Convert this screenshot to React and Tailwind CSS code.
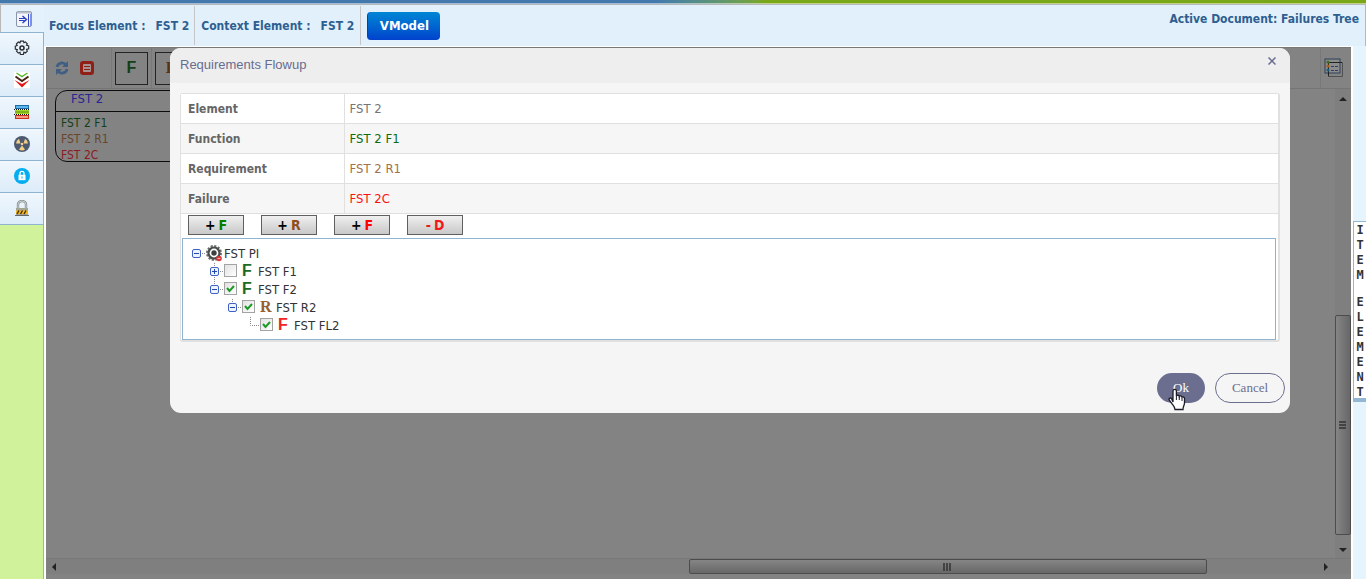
import React, { useState } from 'react';

const SIDE_ITEMS = ['Settings', 'Priorities', 'Library', 'Hazards', 'Unlock', 'Locked'];

const DETAILS = [
  { label: 'Element', value: 'FST 2', color: 'text-[#757575]' },
  { label: 'Function', value: 'FST 2 F1', color: 'text-[#0f6a0f]' },
  { label: 'Requirement', value: 'FST 2 R1', color: 'text-[#a0714a]' },
  { label: 'Failure', value: 'FST 2C', color: 'text-[#ff1010]' },
];

const ACTIONS = [
  { sign: '+', letter: 'F', color: 'text-[#008000]', signColor: 'text-black', label: 'Add function' },
  { sign: '+', letter: 'R', color: 'text-[#8f4f1c]', signColor: 'text-black', label: 'Add requirement' },
  { sign: '+', letter: 'F', color: 'text-[#ff0000]', signColor: 'text-black', label: 'Add failure' },
  { sign: '-', letter: 'D', color: 'text-[#f01818]', signColor: 'text-[#f01818]', label: 'Delete' },
];

const NODES = [
  { id: 'f1', name: 'FST F1', type: 'F', color: 'text-[#1d6b22]', indent: 'pl-[18px]', open: false, expander: true, checked: false },
  { id: 'f2', name: 'FST F2', type: 'F', color: 'text-[#1d6b22]', indent: 'pl-[18px]', open: true, expander: true, checked: true },
  { id: 'r2', name: 'FST R2', type: 'R', color: 'text-[#98602f]', indent: 'pl-9', open: true, expander: true, checked: true },
  { id: 'fl2', name: 'FST FL2', type: 'F', color: 'text-[#f42222]', indent: 'pl-[54px]', expander: false, checked: true },
];

const SideIcon = ({ name }) => {
  if (name === 'Settings') {
    return (
      <svg width="16" height="16" viewBox="0 0 16 16" fill="none" stroke="#2b2f33" strokeWidth="1.2">
        <path d="M6.5 1.2h3l.4 1.5 1.5-.8 1.9 1.9-.8 1.4 2.2.7v3l-2.1.6.7 1.6-1.9 1.9-1.5-.8-.5 2.3h-3L6 12.3l-1.6.8-1.9-1.9.8-1.5-2-.6v-3l1.9-.6-.8-1.6 2-1.9 1.5.8z" />
        <circle cx="8" cy="8" r="2" strokeWidth="1.6" />
      </svg>
    );
  }
  if (name === 'Priorities') {
    return (
      <svg width="16" height="16" viewBox="0 0 16 16" fill="none">
        <rect width="16" height="16" fill="#fff" />
        <path d="M2.5 1l5.5 3.6L13.5 1" stroke="#58b92c" strokeWidth="1.4" />
        <path d="M1.5 4.5L8 9l6.5-4.5" stroke="#4a2418" strokeWidth="2" />
        <path d="M.5 8L8 15.5 15.5 8 8 12z" fill="#e81414" />
      </svg>
    );
  }
  if (name === 'Library') {
    return (
      <svg width="16" height="16" viewBox="0 0 16 16">
        <rect x="1.5" y="1.5" width="13" height="3" fill="#5ab6ec" stroke="#1c6ca4" />
        <rect x="1" y="6" width="14" height="4" fill="#a4d62c" />
        <path d="M0 5.5h16M0 10.5h16" stroke="#111" strokeDasharray="1 1" />
        <path d="M1 8h14" stroke="#5c8d0b" />
        <rect x="1.5" y="11.5" width="13" height="3" fill="#f49a80" stroke="#cc2d1c" />
      </svg>
    );
  }
  if (name === 'Hazards') {
    return (
      <svg width="16" height="16" viewBox="0 0 16 16">
        <circle cx="8" cy="8" r="8" fill="#4d5a70" />
        <g fill="#f6cf86">
          <path d="M6.5 7.5H2A6 6 0 0 1 5 2.8z" />
          <path d="M9.5 7.5H14A6 6 0 0 0 11 2.8z" />
          <path d="M8 9.5l3 4.1a6 6 0 0 1-6 0z" />
          <circle cx="8" cy="8" r="1.3" />
        </g>
      </svg>
    );
  }
  if (name === 'Unlock') {
    return (
      <svg width="16" height="16" viewBox="0 0 16 16">
        <circle cx="8" cy="8" r="8" fill="#04adf0" />
        <path d="M6 7V5.3a2 2 0 0 1 4 0V7" fill="none" stroke="#fff" strokeWidth="1.3" />
        <rect x="4.5" y="6.8" width="7" height="5.4" fill="#fff" />
        <rect x="7.5" y="8.5" width="1" height="2" fill="#04adf0" />
      </svg>
    );
  }
  return (
    <svg width="16" height="16" viewBox="0 0 16 16">
      <path d="M4 9V4.5a4 3.5 0 0 1 8 0V9" fill="none" stroke="#849092" strokeWidth="2.4" />
      <path d="M4 9V4.5a4 3.5 0 0 1 8 0V9" fill="none" stroke="#c9d2d2" strokeWidth="1" />
      <rect x="2" y="8" width="12" height="7" fill="#a5a594" />
      <rect x="2" y="10.5" width="12" height="3.5" fill="#f3b416" />
      <path d="M3 14l2-3.5M6.5 14l2-3.5M10 14l2-3.5" stroke="#33280a" strokeWidth="1.3" />
      <path d="M1 15.5h14" stroke="#666" />
    </svg>
  );
};

const Expander = ({ open, name }) => (
  <button type="button" aria-label={`Toggle ${name}`} className="w-[10px] h-[18px] shrink-0">
    <svg width="10" height="18" viewBox="0 0 10 18">
      <path
        d={name === 'FST F1' ? 'M4.5 0v4M4.5 14v4' : 'M4.5 0v4'}
        stroke={name === 'FST PI' ? 'none' : '#8a8a8a'}
        strokeDasharray="1 1"
      />
      <rect x=".5" y="4.5" width="8" height="8" rx="1.5" fill="#eef4ff" stroke="#3f62c4" />
      <path d={open ? 'M2 8.5h5' : 'M2 8.5h5M4.5 6v5'} stroke="#2347ac" />
    </svg>
  </button>
);

const TreeNode = ({ node, checked, onToggle }) => (
  <div className={`flex items-center h-[18px] ${node.indent}`}>
    {node.expander ? (
      <>
        <Expander open={node.open} name={node.name} />
        <svg width="4" height="18" className="shrink-0">
          <path d="M0 8.5h4" stroke="#8a8a8a" strokeDasharray="1 1" />
        </svg>
      </>
    ) : (
      <svg width="14" height="18" className="shrink-0">
        <path d="M4.5 0v8.5H14" fill="none" stroke="#8a8a8a" strokeDasharray="1 1" />
      </svg>
    )}
    <label className="flex items-center">
      <span className="relative flex w-[18px] pb-0.5">
        <input
          type="checkbox"
          checked={checked}
          onChange={() => onToggle(node.id)}
          className="appearance-none w-[13px] h-[13px] border border-[#a3a3a3] bg-linear-to-br from-[#e2e2e2] to-white"
        />
        {checked && (
          <svg width="13" height="13" className="absolute left-0 top-0 pointer-events-none">
            <path d="M3 6l2.5 3L10 4" fill="none" stroke="#1d9c25" strokeWidth="2" />
          </svg>
        )}
      </span>
      <span
        className={`w-4 pb-0.5 text-base leading-4 font-bold ${node.color} ${
          node.type === 'R' ? "font-['Liberation_Serif',serif]" : "font-['Liberation_Sans',sans-serif]"
        }`}
      >
        {node.type}
      </span>
      <span>{node.name}</span>
    </label>
  </div>
);

const Header = () => (
  <header className="flex justify-between h-[41px] shrink-0 bg-[#e2f0fb] border-r border-[#b8b8b8] font-bold text-xs text-[#2e5f91]">
    <div className="flex items-center">
      <div className="flex items-center h-[39px] px-[5px] gap-[10px] border-r border-[#c6c6c6]">
        <span>Focus Element :</span>
        <span>FST 2</span>
      </div>
      <div className="flex items-center h-[39px] px-[6px] gap-[10px] border-r border-[#c6c6c6]">
        <span>Context Element :</span>
        <span>FST 2</span>
      </div>
      <button type="button" className="ml-[6px] h-7 w-[73px] rounded-[4px] text-white text-[13px] border-l border-[#0a3cc0] bg-linear-to-b from-[#0486d4] to-[#0341cc]">
        VModel
      </button>
    </div>
    <span className="pt-[6px] pr-[6px]">Active Document: Failures Tree</span>
  </header>
);

const Sidebar = () => (
  <nav className="flex flex-col w-11 shrink-0 bg-[#cff29a] border-r border-[#8fb4d2]">
    <button type="button" aria-label="Collapse" className="h-[27px] pl-[3px] -mr-px flex items-center justify-center bg-[#e5f1fb] border-l border-[#b8b8b8]">
      <svg width="16" height="16" viewBox="0 0 16 16" fill="none">
        <rect x=".5" y=".5" width="15" height="15" rx="1.5" fill="#f2f5fb" stroke="#8b93a6" />
        <path d="M1 1.5h14" stroke="#b9bfca" strokeWidth="2" />
        <path d="M12.5 3v12" stroke="#3345c0" />
        <path d="M14.5 3v12" stroke="#7d93e8" />
        <path d="M3 7.5h6M3 9.5h6" stroke="#2b3fc0" />
        <path d="M6.5 5l4 3.5-4 3.5" stroke="#2b3fc0" strokeWidth="1.4" />
      </svg>
    </button>
    <div className="border-t border-[#8fb4d2]">
      {SIDE_ITEMS.map((name) => (
        <button
          key={name}
          type="button"
          aria-label={name}
          className="w-full h-8 pb-px flex items-center justify-center bg-linear-to-b from-[#f0f7fd] to-[#dcecf9] border-b border-[#8fb4d2]"
        >
          <SideIcon name={name} />
        </button>
      ))}
    </div>
  </nav>
);

const Toolbar = () => (
  <div className="flex items-center justify-between h-[42px] border-t border-l border-b border-b-[#757575] border-t-[#777] border-l-[#777]">
    <div className="flex items-center">
      <div className="flex items-center h-10 w-[65px] pl-2 gap-[10px] border-r border-[#787878]">
        <button type="button" aria-label="Refresh">
          <svg width="14" height="14" viewBox="0 0 14 14" fill="none" stroke="#415f82" strokeWidth="2.8">
            <path d="M2 6a5 5 0 0 1 9-2M12 8a5 5 0 0 1-9 2" />
            <path d="M13 0v6H7zM1 14V8h6z" fill="#415f82" stroke="none" />
          </svg>
        </button>
        <button type="button" aria-label="Remove">
          <svg width="16" height="16" viewBox="0 0 16 16">
            <rect x="1" y="1" width="14" height="14" rx="3" fill="#901f18" />
            <rect x="4" y="4" width="8" height="8" rx="1" fill="#a69290" />
            <path d="M5 6.5h6M5 9.5h6" stroke="#901f18" />
          </svg>
        </button>
      </div>
      <div className="flex items-center h-10 w-10 pl-[3px] border-r border-[#787878]">
        <button type="button" className="w-[33px] h-[33px] border border-[#222] text-[#123f15] text-base leading-4 font-bold font-['Liberation_Sans',sans-serif]">
          F
        </button>
      </div>
      <button type="button" className="ml-[3px] w-[33px] h-[33px] border border-[#222] text-[#553319] text-base leading-4 font-bold font-['Liberation_Serif',serif]">
        R
      </button>
    </div>
    <button type="button" aria-label="Legend" className="h-10 w-[31px] pl-[3px] border-l border-[#787878]">
      <svg width="20" height="20" viewBox="0 0 20 20" fill="none">
        <rect x="1" y="1" width="15" height="14" fill="#8c8c8c" stroke="#2d4058" />
        <path d="M4.5 18V4.5H18.5V18.5H4" stroke="#505050" />
        <path d="M4.5 18V4.5H18" stroke="#222" />
        <path d="M7 8.5h3M11 8.5h3M7 12.5h3M11 12.5h3" stroke="#303f68" />
        <circle cx="4" cy="4" r="1.6" fill="#3f6e1c" />
        <circle cx="4" cy="8" r="1.6" fill="#b05c14" />
        <circle cx="4" cy="12" r="1.6" fill="#166080" />
      </svg>
    </button>
  </div>
);

const Canvas = () => (
  <div className="flex-1 flex flex-col min-h-0">
    <div className="flex-1 flex min-h-0">
      <div className="flex-1 pl-[9px] pt-px">
        <div className="w-80 h-[72px] border border-[#0c0c0c] rounded-xl text-[13px] leading-4 overflow-hidden">
          <div className="h-[21px] pl-[15px] text-[#2a2494] border-b border-[#0c0c0c]">FST 2</div>
          <ul className="pl-[5px] pt-[3px] text-xs leading-4">
            <li className="text-[#123f15]">FST 2 F1</li>
            <li className="text-[#68452b]">FST 2 R1</li>
            <li className="text-[#8e1a22]">FST 2C</li>
          </ul>
        </div>
      </div>
      <div className="w-4 flex flex-col items-center bg-[#7f7f7f]">
        <svg width="8" height="18" className="shrink-0"><path d="M0 12h8L4 8z" fill="#222" /></svg>
        <div className="flex-[209]" />
        <div className="flex-[219] w-full flex items-center justify-center rounded-xs border border-[#4c4c4c] bg-linear-to-r from-[#858585] to-[#676769]">
          <svg width="8" height="9"><path d="M0 1h7M0 4h7M0 7h7" stroke="#333" strokeWidth="1.5" /></svg>
        </div>
        <svg width="8" height="23" className="shrink-0"><path d="M0 13h8l-4 4z" fill="#222" /></svg>
      </div>
    </div>
    <div className="flex items-center h-4 mb-[5px] border-t border-[#787878] bg-[#7f7f7f]">
      <svg width="16" height="10" className="shrink-0"><path d="M10 1v8L6 5z" fill="#222" /></svg>
      <div className="flex-[628]" />
      <div className="flex-[518] h-[15px] flex items-center justify-center rounded-xs border border-[#4c4c4c] bg-linear-to-b from-[#858585] to-[#686868]">
        <svg width="9" height="8"><path d="M1 0v8M4 0v8M7 0v8" stroke="#333" strokeWidth="1.5" /></svg>
      </div>
      <div className="flex-[112]" />
      <svg width="32" height="10" className="shrink-0"><path d="M5 1v8l4-4z" fill="#222" /></svg>
    </div>
  </div>
);

const FlowupDialog = () => {
  const [checked, setChecked] = useState(
    Object.fromEntries(NODES.map((node) => [node.id, node.checked]))
  );

  const toggle = (id) => setChecked((prev) => ({ ...prev, [id]: !prev[id] }));

  return (
    <section role="dialog" aria-labelledby="flowup-title" className="absolute left-[124px] right-[61px] top-px rounded-[11px] overflow-hidden bg-[#f5f5f5]">
      <div className="flex justify-between h-[35px] pl-[10px] pr-[13px] bg-[#eeeeee] text-[#696c8e]">
        <h2 id="flowup-title" className="pt-2 text-[13px] leading-[18px] font-['Liberation_Sans',sans-serif]">Requirements Flowup</h2>
        <button type="button" aria-label="Close" className="w-[10px] h-[26px] flex items-center justify-center">
          <svg width="8" height="8" viewBox="0 0 8 8"><path d="M.5.5l7 7M7.5.5l-7 7" stroke="#696c8e" strokeWidth="1.5" /></svg>
        </button>
      </div>

      <div className="mt-[10px] mx-[10px] border border-r-2 border-b-2 border-[#e0e0e0] rounded-[3px] bg-white">
        <table className="w-full text-[13px] leading-[18px]">
          <tbody>
            {DETAILS.map((row) => (
              <tr key={row.label} className="h-[30px] first:h-[29px] border-b border-[#e0e0e0] odd:bg-white even:bg-[#f6f6f6]">
                <th scope="row" className="w-[163px] pl-[7px] pt-0.5 text-left text-xs leading-[18px] text-[#666] border-r border-[#e0e0e0]">{row.label}</th>
                <td className={`pl-[5px] pt-px ${row.color}`}>{row.value}</td>
              </tr>
            ))}
          </tbody>
        </table>

        <div className="flex gap-[17px] pl-[7px] pt-px pb-[2px]">
          {ACTIONS.map((action) => (
            <button
              key={action.label}
              type="button"
              aria-label={action.label}
              className="flex items-center justify-center gap-[3px] w-14 h-5 border border-[#606060] bg-linear-to-b from-[#f0f0f0] to-[#c8c8c8] font-bold text-sm leading-4"
            >
              <span className={action.signColor}>{action.sign}</span>
              <span className={action.color}>{action.letter}</span>
            </button>
          ))}
        </div>

        <div className="mt-px ml-px mr-0.5 h-[102px] pt-[6px] pl-[9px] border border-[#8fb4d2] bg-white text-[13px] text-[#333]">
          <div className="flex items-center h-[18px]">
            <Expander open name="FST PI" />
            <svg width="4" height="18"><path d="M0 8.5h4" stroke="#8a8a8a" strokeDasharray="1 1" /></svg>
            <svg width="18" height="18" viewBox="0 0 18 18">
              <circle cx="8" cy="8" r="7" fill="none" stroke="#6c706e" strokeWidth="2" strokeDasharray="2.2 1.465" />
              <circle cx="8" cy="8" r="5.5" fill="none" stroke="#4a4e4b" strokeWidth="2.2" />
              <circle cx="8" cy="8" r="2.7" fill="#3d413e" />
              <circle cx="13" cy="13.5" r="2.8" fill="#d83a3a" />
              <path d="M11.5 13.5h3" stroke="#f6b0b0" />
            </svg>
            <span>FST PI</span>
          </div>
          {NODES.map((node) => (
            <TreeNode key={node.id} node={node} checked={checked[node.id]} onToggle={toggle} />
          ))}
        </div>
      </div>

      <div className="flex justify-end gap-[10px] pt-[31px] pb-[10px] pr-[5px] text-[13px] font-['Liberation_Serif',serif]">
        <button type="button" className="relative w-12 h-[30px] rounded-full bg-[#6b6e8f] text-white">
          Ok
          <svg width="18" height="23" viewBox="0 0 18 23" className="absolute left-[11px] top-[15px] pointer-events-none">
            <path
              d="M5 14V3a1.7 1.7 0 0 1 3.4 0v5c.3-1.2 2.7-1 2.9.5.6-1 2.6-.6 2.7.7.8-.7 2.5 0 2.5 1.3V15c0 2-1.5 3.5-1.5 6.5H7C7 18.5 4.5 17 3.5 15L1.2 12c-.8-1.8 1.3-2.5 2.3-1.5z"
              fill="#fff"
              stroke="#1c1c28"
              strokeWidth="1.3"
            />
            <path d="M8.4 8v4M11.3 9v3M14 10v3" stroke="#1c1c28" />
          </svg>
        </button>
        <button type="button" className="w-[70px] h-[30px] rounded-full border border-[#6b6e8f] text-[#6b6e8f]">Cancel</button>
      </div>
    </section>
  );
};

const ItemElementTab = () => (
  <aside className="w-[13px] shrink-0 bg-[#e6f4fd] pt-[175px] overflow-hidden">
    <button
      type="button"
      aria-label="Item element"
      className="block w-full h-[181px] pt-px border-t border-l border-b-4 border-[#92b6d3] bg-white font-bold text-xs leading-[15px] text-[#333] font-['DejaVu_Sans_Mono',monospace]"
    >
      {['ITEM', 'ELEMENT'].map((word) => (
        <span key={word} className="flex flex-col items-center mb-3 last:mb-0">
          {word.split('').map((letter, index) => (
            <span key={index}>{letter}</span>
          ))}
        </span>
      ))}
    </button>
  </aside>
);

const App = () => (
  <div className="flex flex-col h-screen overflow-hidden bg-white font-['DejaVu_Sans_Condensed','DejaVu_Sans',sans-serif]">
    <div className="h-[5px] shrink-0 border-b border-[#b8b8b8] bg-linear-to-r from-[#4479ae] from-48% to-[#7aa716] to-56%">
      <div className="mt-[3px] h-px bg-white/50" />
    </div>
    <div className="flex-1 flex min-h-0">
      <Sidebar />
      <div className="flex-1 flex flex-col min-w-0">
        <Header />
        <div className="flex-1 flex min-h-0">
          <main className="relative flex-1 flex flex-col mt-px mx-[2px] bg-[#838383]">
            <Toolbar />
            <Canvas />
            <FlowupDialog />
          </main>
          <ItemElementTab />
        </div>
      </div>
    </div>
  </div>
);

export default App;
